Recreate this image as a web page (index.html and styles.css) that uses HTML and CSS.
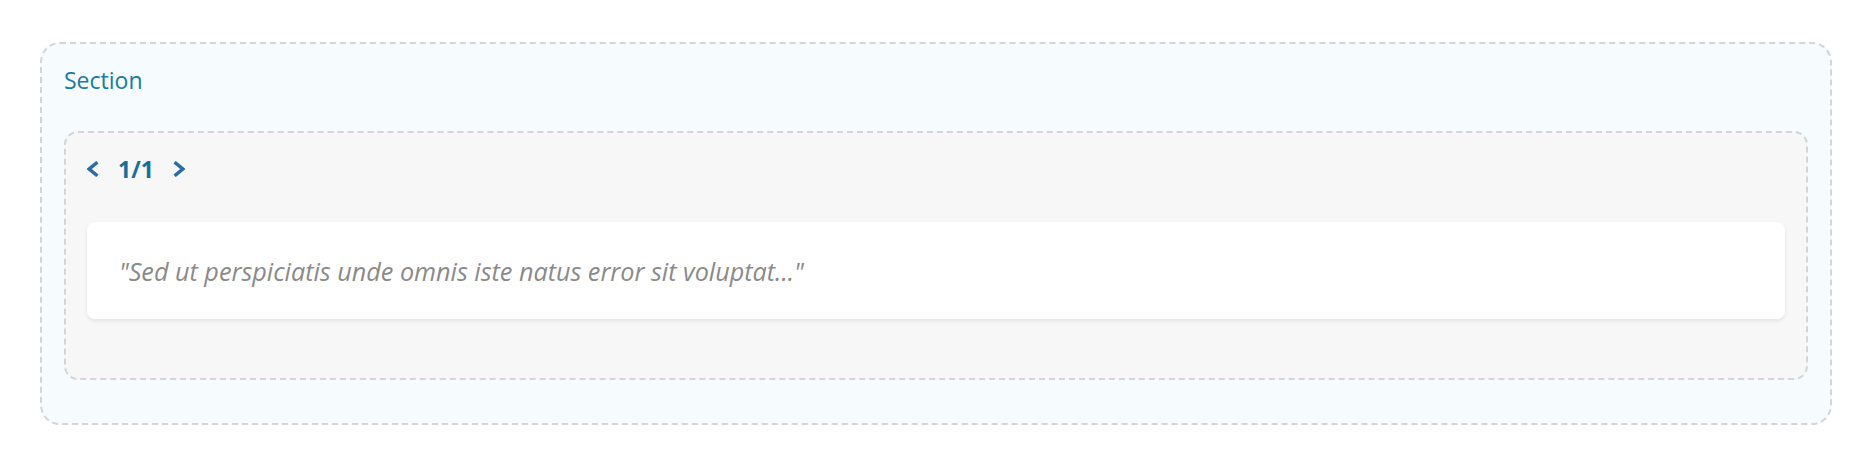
FILE: index.html
```html
<!DOCTYPE html>
<html lang="en">
<head>
<meta charset="utf-8">
<title>Section</title>
<link rel="stylesheet" href="styles.css">
</head>
<body>
<section class="outer">
  <h2 class="title">Section</h2>
  <div class="inner">
    <div class="pager">
      <button class="nav" aria-label="Previous">
        <svg width="12" height="16" viewBox="0 0 12 16"><polyline points="10.4,1.2 2.2,8 10.4,14.8" fill="none" stroke="#2a6da6" stroke-width="3.4"/></svg>
      </button>
      <span class="count">1/1</span>
      <button class="nav" aria-label="Next">
        <svg width="12" height="16" viewBox="0 0 12 16"><polyline points="1.6,1.2 9.8,8 1.6,14.8" fill="none" stroke="#2a6da6" stroke-width="3.4"/></svg>
      </button>
    </div>
    <div class="card">
      <p class="quote">"Sed ut perspiciatis unde omnis iste natus error sit voluptat..."</p>
    </div>
  </div>
</section>
</body>
</html>
```
FILE: styles.css
```css
* { box-sizing: border-box; }
html, body { margin: 0; background: #ffffff; }
body { padding: 42px 40px 0 40px; font-family: "Open Sans", "Noto Sans", sans-serif; }

.outer {
  background: #f6fbfd;
  border: 2px dashed #d2d6d8;
  border-radius: 20px;
  padding: 21px 22px 43px 22px;
}
.title {
  margin: 0 0 36px 0;
  font-size: 23px;
  font-weight: 400;
  line-height: 30px;
  color: #177ba6;
}
.inner {
  background: #f7f7f7;
  border: 2px dashed #d2d6d8;
  border-radius: 14px;
  padding: 22px 21px 59px 21px;
}
.pager {
  display: flex;
  align-items: center;
  gap: 19px;
  height: 28px;
  margin-bottom: 39px;
}
.nav {
  border: 0;
  background: none;
  padding: 0;
  display: flex;
  align-items: center;
}
.count {
  font-size: 23px;
  font-weight: 700;
  color: #17709a;
  line-height: 28px;
}
.card {
  background: #ffffff;
  border-radius: 8px;
  box-shadow: 0 2px 4px rgba(0,0,0,0.08);
  height: 97px;
  display: flex;
  align-items: center;
  padding: 0 32px;
}
.quote {
  margin: 0;
  font-style: italic;
  font-size: 25.2px;
  color: #8a8a8a;
}
```
